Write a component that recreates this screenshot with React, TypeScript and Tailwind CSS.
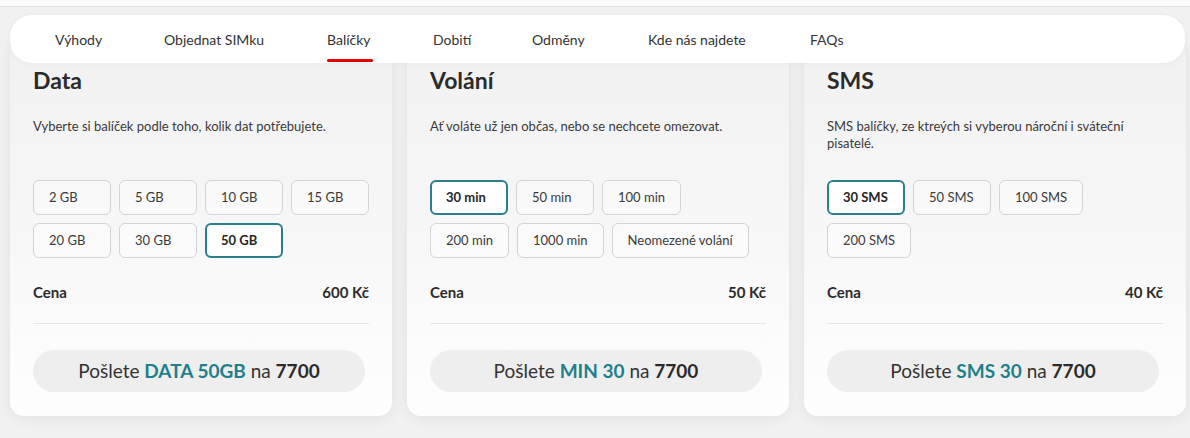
import React from "react";

type Card = {
  title: string;
  desc: string;
  options: string[];
  selected: string;
  price: string;
  code: string;
};

const cards: Card[] = [
  {
    title: "Data",
    desc: "Vyberte si balíček podle toho, kolik dat potřebujete.",
    options: ["2 GB", "5 GB", "10 GB", "15 GB", "20 GB", "30 GB", "50 GB"],
    selected: "50 GB",
    price: "600 Kč",
    code: "DATA 50GB",
  },
  {
    title: "Volání",
    desc: "Ať voláte už jen občas, nebo se nechcete omezovat.",
    options: ["30 min", "50 min", "100 min", "200 min", "1000 min", "Neomezené volání"],
    selected: "30 min",
    price: "50 Kč",
    code: "MIN 30",
  },
  {
    title: "SMS",
    desc: "SMS balíčky, ze ktreých si vyberou nároční i sváteční pisatelé.",
    options: ["30 SMS", "50 SMS", "100 SMS", "200 SMS"],
    selected: "30 SMS",
    price: "40 Kč",
    code: "SMS 30",
  },
];

const tabs = [
  { label: "Výhody", w: "w-[109px]" },
  { label: "Objednat SIMku", w: "w-[163px]" },
  { label: "Balíčky", w: "w-[106px]" },
  { label: "Dobití", w: "w-[99px]" },
  { label: "Odměny", w: "w-[116px]" },
  { label: "Kde nás najdete", w: "w-[162px]" },
  { label: "FAQs", w: "w-[60px]" },
];

function PackageCard({ c }: { c: Card }) {
  return (
    <div className="w-[382px] h-[376px] rounded-[14px] bg-gradient-to-b from-[#f1f1f1] via-[#f7f7f7] to-[#fefefe] shadow-[0_2px_14px_rgba(0,0,0,0.07)] px-[23px] pt-[26px] pb-[23px] flex flex-col">
      <h2 className="text-[23px] leading-[28px] font-bold text-[#2b2b2b]">{c.title}</h2>
      <p className="mt-[24px] h-[40px] text-[13px] leading-[17px] text-[#3a3a3a] pr-[20px]">{c.desc}</p>
      <div className="mt-[22px] flex flex-wrap gap-x-[8px] gap-y-[8px] h-[78px] content-start">
        {c.options.map((o) => {
          const sel = o === c.selected;
          return (
            <div
              key={o}
              className={
                sel
                  ? "h-[35px] min-w-[78px] px-[14px] flex items-center rounded-[6px] border-2 border-[#2b7f8d] text-[13px] font-bold text-[#262626] bg-white"
                  : "h-[35px] min-w-[78px] px-[15px] flex items-center rounded-[6px] border border-[#d4d4d4] text-[13px] text-[#3a3a3a] bg-white/40"
              }
            >
              {o}
            </div>
          );
        })}
      </div>
      <div className="mt-[24px] flex justify-between items-center h-[20px] text-[15px] font-bold text-[#2b2b2b]">
        <span>Cena</span>
        <span>{c.price}</span>
      </div>
      <div className="mt-[21px] h-px bg-[#e6e6e6]" />
      <div className="mt-[26px] w-[332px] h-[42px] rounded-full bg-[#eeeeee] flex items-center justify-center text-[19px] text-[#333]">
        <span>
          Pošlete <b className="text-[#1f7f8c] font-bold">{c.code}</b> na <b className="font-bold text-[#2b2b2b]">7700</b>
        </span>
      </div>
    </div>
  );
}

export default function App() {
  return (
    <div className="w-[1190px] h-[438px] bg-[#f1f1f1] overflow-hidden font-['Lato','Noto_Sans',sans-serif]">
      <div className="h-[7px] bg-[#fbfbfb] border-b border-[#e2e2e2]" />
      <div className="relative z-10 mt-[8px] ml-[10px] mr-[5px] h-[48px] rounded-[22px] bg-white shadow-[0_1px_6px_rgba(0,0,0,0.04)] flex items-center pl-[45px]">
        {tabs.map((t) => (
          <div key={t.label} className={`${t.w} relative h-full flex items-center text-[14px] text-[#333]`}>
            {t.label}
            {t.label === "Balíčky" && (
              <span className="absolute left-0 bottom-[1px] w-[46px] h-[3px] bg-[#e60000] rounded-full" />
            )}
          </div>
        ))}
      </div>
      <div className="-mt-[23px] pl-[10px] flex gap-[15px]">
        {cards.map((c) => (
          <PackageCard key={c.title} c={c} />
        ))}
      </div>
    </div>
  );
}
